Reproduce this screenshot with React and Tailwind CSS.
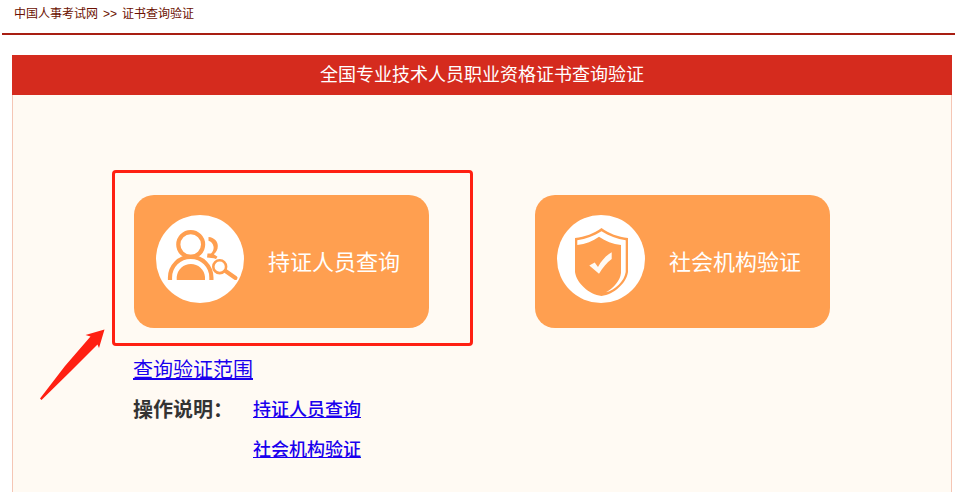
import React from 'react';

const guides = [
  { label: '持证人员查询', href: '#holder-guide' },
  { label: '社会机构验证', href: '#org-guide' },
];

function HolderIcon() {
  return (
    <svg viewBox="0 0 88 88" className="w-22 h-22 shrink-0" aria-hidden="true">
      <circle cx="44" cy="44" r="44" fill="#fff" />
      <path
        d="M52.5 22C58.5 22.5 61.8 26.5 61.8 31C61.8 34.5 60.5 37 57.8 39.2L61.5 41.8L60 44C57 43 54 42.8 51 42.6L51.5 38.6H55C57 36.5 58 34 57.5 31.5C57 28.5 55 26.5 52.5 25.8Z"
        fill="#ff9f50"
      />
      <g fill="none" stroke="#ff9f50">
        <circle cx="34.7" cy="29.5" r="12.4" strokeWidth="4.2" />
        <path d="M14 65V62.5A20.7 20.7 0 0 1 55.4 62.5V65" strokeWidth="4.2" />
        <circle cx="63.7" cy="51.7" r="6.4" strokeWidth="2.6" fill="#fff" />
        <path d="M69.5 56L79.5 63" strokeWidth="4" strokeLinecap="round" />
      </g>
      <path d="M20.7 65V62A14.2 14.2 0 0 1 49 62V65Z" fill="#ff9f50" />
    </svg>
  );
}

function ShieldIcon() {
  return (
    <svg viewBox="0 0 88 88" className="w-22 h-22 shrink-0" aria-hidden="true">
      <circle cx="44" cy="44" r="44" fill="#fff" />
      <path
        d="M44.5 13C52 18.5 61 22 71 23V57C69.5 68 57 79.5 44.5 81C32 79.5 19.5 68 18 57V23C28 22 37 18.5 44.5 13Z"
        fill="#ff9f50"
      />
      <path
        d="M20.3 30V25.2C29 24 37 21 44.5 16.3C52 21 60 24 68.7 25.2V57C67.5 66 58 75 49 77.3C57 72.5 63 66 64 58V30C55.5 29 48.5 26 42 21.7C36 26 28.5 29 20.3 30Z"
        fill="#fff"
      />
      <path
        d="M32.3 50.5L37.7 47.5L41 52C44.5 45.5 49 40.5 54.7 37.3V44C49.5 48 46 52.5 42 58.7Z"
        fill="#fffaf3"
      />
    </svg>
  );
}

function EntryButton({ icon, label }) {
  return (
    <button
      type="button"
      className="flex items-start w-[295px] h-[133px] pl-[22px] pt-5 rounded-[20px] bg-[#ff9f50] text-white cursor-pointer"
    >
      {icon}
      <span className="ml-6 mt-8 text-[22px] leading-8 whitespace-nowrap">{label}</span>
    </button>
  );
}

// Red frame and arrow drawn over the page to point out the entry
function Highlight() {
  return (
    <>
      <div className="absolute -left-[22px] -right-11 -top-[25px] -bottom-[18px] border-3 border-[#ff2012] rounded-sm pointer-events-none" />
      <svg
        viewBox="0 0 66 72"
        className="absolute -left-[94px] top-[134px] w-[66px] h-[72px] pointer-events-none"
        aria-hidden="true"
      >
        <path d="M64.5 0.5L45.5 6L50.5 7.5L25 37L0 69.5L1.5 71L30.5 42.5L57.5 15.5L59 19Z" fill="#ff2012" />
      </svg>
    </>
  );
}

export default function App() {
  return (
    <div className="flex flex-col min-h-screen bg-white font-['Liberation_Sans','Noto_Sans_CJK_SC',sans-serif]">
      <nav className="flex items-center gap-[5px] h-[35px] ml-0.5 pl-3 pb-1.5 border-b-2 border-[#a81e12] text-xs text-[#6b0f00]">
        <a href="#home">中国人事考试网</a>
        <span>&gt;&gt;</span>
        <a href="#query">证书查询验证</a>
      </nav>

      <main className="flex flex-col flex-1 mt-5 ml-3 mr-[3px]">
        <h1 className="h-10 bg-[#d52b1e] text-white text-lg leading-10 font-normal text-center">
          全国专业技术人员职业资格证书查询验证
        </h1>

        <div className="flex-1 border-x border-[#f5c6b5] bg-[#fffaf3]">
          <div className="flex flex-wrap gap-x-[106px] gap-y-12 pl-[121px] pt-25">
            <div className="relative">
              <EntryButton icon={<HolderIcon />} label="持证人员查询" />
              <Highlight />
            </div>
            <EntryButton icon={<ShieldIcon />} label="社会机构验证" />
          </div>

          <div className="pl-30 pt-[22px]">
            <a href="#scope" className="block w-fit text-xl leading-10 text-[#1a00ee] underline">
              查询验证范围
            </a>
            <div className="flex">
              <h2 className="w-30 text-xl leading-10 font-bold text-[#333333]">操作说明：</h2>
              <ul>
                {guides.map((g) => (
                  <li key={g.href}>
                    <a href={g.href} className="block w-fit text-lg leading-10 font-medium text-[#1a00ee] underline">
                      {g.label}
                    </a>
                  </li>
                ))}
              </ul>
            </div>
          </div>
        </div>
      </main>
    </div>
  );
}
